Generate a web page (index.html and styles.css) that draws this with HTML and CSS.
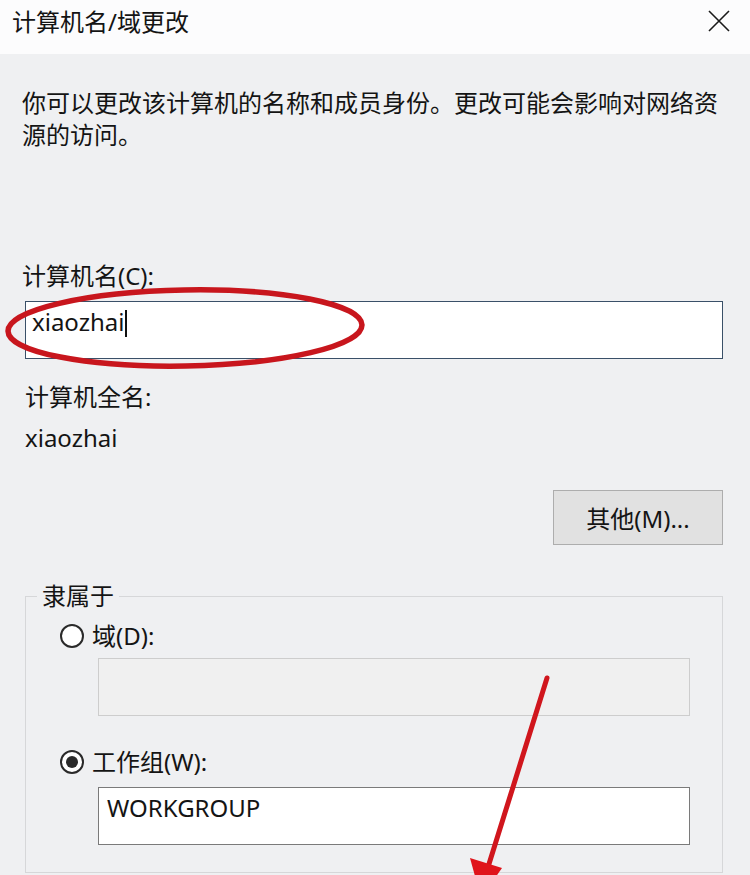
FILE: index.html
```html
<!DOCTYPE html>
<html lang="zh-CN">
<head>
<meta charset="utf-8">
<title>计算机名/域更改</title>
<link rel="stylesheet" href="styles.css">
</head>
<body>
<div class="dialog">
  <div class="titlebar">
    <div class="title">计算机名/域更改</div>
    <div class="close">
      <svg width="22" height="22" viewBox="0 0 22 22"><path d="M1 1L21 21M21 1L1 21" stroke="#1a1a1a" stroke-width="1.6" fill="none"/></svg>
    </div>
  </div>
  <div class="content">
    <p class="desc">你可以更改该计算机的名称和成员身份。更改可能会影响对网络资源的访问。</p>
    <div class="label label-name">计算机名(C):</div>
    <div class="input input-focus"><span>xiaozhai</span><span class="caret"></span></div>
    <div class="label label-full">计算机全名:</div>
    <div class="label label-value">xiaozhai</div>
    <div class="btn-row"><div class="btn">其他(M)...</div></div>
    <div class="group">
      <div class="legend">隶属于</div>
      <div class="radio-row first"><span class="radio"></span><span>域(D):</span></div>
      <div class="input input-disabled"></div>
      <div class="radio-row second"><span class="radio checked"></span><span>工作组(W):</span></div>
      <div class="input input-plain">WORKGROUP</div>
    </div>
  </div>
  <svg class="annot" width="750" height="875" viewBox="0 0 750 875">
    <ellipse cx="185" cy="328" rx="177" ry="38" fill="none" stroke="#c8161d" stroke-width="5.5" transform="rotate(-1 185 328)"/>
    <path d="M547 678L489 864" stroke="#d0161d" stroke-width="5" stroke-linecap="round" fill="none"/>
    <polygon points="470,858 502,868 481,898" fill="#e0141b"/>
  </svg>
</div>
</body>
</html>
```
FILE: styles.css
```css
html, body {
  margin: 0;
  padding: 0;
}
body {
  background: #eff0f2;
  font-family: "Noto Sans", "Noto Sans CJK SC", sans-serif;
  color: #141414;
}
.dialog {
  position: relative;
  width: 750px;
  height: 875px;
  overflow: hidden;
  background: #eff0f2;
}
.titlebar {
  height: 54px;
  background: #fcfcfd;
  display: flex;
  align-items: center;
  justify-content: space-between;
  padding: 0 20px 0 12px;
}
.title {
  font-size: 24px;
  line-height: 32px;
  margin-top: -10px;
}
.close {
  display: flex;
  margin-top: -12px;
}
.content {
  padding: 0 0 0 22px;
}
.desc {
  margin: 33px 0 0 0;
  width: 700px;
  font-size: 24px;
  line-height: 32px;
}
.label {
  font-size: 24px;
  line-height: 32px;
}
.label-name {
  margin-top: 109px;
}
.label-full {
  margin-top: 22px;
  padding-left: 3px;
}
.label-value {
  margin-top: 9px;
  padding-left: 3px;
}
.input {
  box-sizing: border-box;
  height: 58px;
  font-size: 24px;
  line-height: 32px;
  display: flex;
  align-items: flex-start;
}
.input-focus {
  margin-top: 9px;
  margin-left: 3px;
  width: 698px;
  background: #ffffff;
  border: 1px solid #3a5068;
  padding: 4px 6px;
}
.caret {
  display: inline-block;
  width: 2px;
  height: 27px;
  background: #111;
  margin-top: 4px;
  margin-left: 1px;
}
.btn-row {
  display: flex;
  justify-content: flex-end;
  width: 701px;
  margin-top: 36px;
}
.btn {
  box-sizing: border-box;
  width: 170px;
  height: 55px;
  background: #e1e1e1;
  border: 1px solid #adadad;
  font-size: 24px;
  display: flex;
  align-items: center;
  justify-content: center;
}
.group {
  position: relative;
  margin-top: 51px;
  margin-left: 3px;
  width: 698px;
  box-sizing: border-box;
  border: 1px solid #d6d7d9;
  padding: 23px 0 27px 34px;
}
.legend {
  position: absolute;
  top: -17px;
  left: 11px;
  padding: 0 5px;
  background: #eff0f2;
  font-size: 24px;
  line-height: 32px;
}
.radio-row {
  display: flex;
  align-items: center;
  gap: 8px;
  font-size: 24px;
  line-height: 32px;
}
.radio {
  box-sizing: border-box;
  width: 24px;
  height: 24px;
  border: 2px solid #2a2a2a;
  border-radius: 50%;
  background: #ffffff;
  display: flex;
  align-items: center;
  justify-content: center;
}
.radio.checked::after {
  content: "";
  width: 12px;
  height: 12px;
  border-radius: 50%;
  background: #2a2a2a;
}
.input-disabled {
  margin-top: 6px;
  margin-left: 38px;
  width: 592px;
  background: #f0f0f0;
  border: 1px solid #cdcdcd;
}
.radio-row.second {
  margin-top: 30px;
}
.input-plain {
  margin-top: 9px;
  margin-left: 38px;
  width: 592px;
  background: #ffffff;
  border: 1px solid #7a7a7a;
  padding: 4px 8px;
}
.annot {
  position: absolute;
  top: 0;
  left: 0;
  pointer-events: none;
}
```
